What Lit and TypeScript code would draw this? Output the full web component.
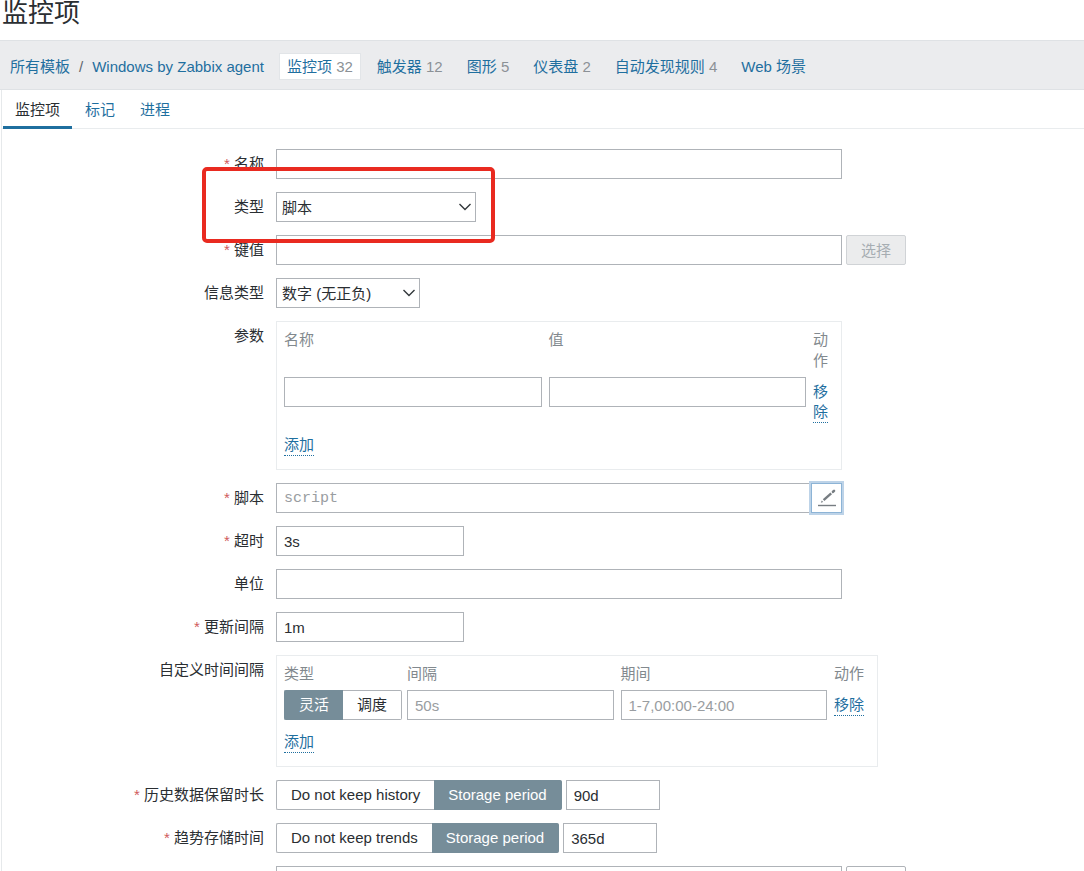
import { LitElement, html, css, nothing, type TemplateResult } from "lit";
import { customElement, state } from "lit/decorators.js";
import { classMap } from "lit/directives/class-map.js";

interface NavItem {
  text: string;
  count?: number;
  current?: boolean;
}

const NAV: NavItem[] = [
  { text: "监控项", count: 32, current: true },
  { text: "触发器", count: 12 },
  { text: "图形", count: 5 },
  { text: "仪表盘", count: 2 },
  { text: "自动发现规则", count: 4 },
  { text: "Web 场景" },
];

const TABS = ["监控项", "标记", "进程"];

@customElement("app-root")
export class AppRoot extends LitElement {
  @state() private tab = 0;

  static styles = css`
    :host {
      display: block;
      height: 100vh;
      overflow: hidden;
      background: #fff;
      color: #2a2e32;
      font: 15px/21px "Liberation Sans", Arial, "Noto Sans CJK SC", sans-serif;
    }
    * {
      box-sizing: border-box;
    }
    a {
      color: #1f6f9f;
      text-decoration: none;
    }
    input,
    select,
    button {
      font: inherit;
      color: inherit;
      margin: 0;
      border-radius: 0;
    }
    .title {
      margin: 0;
      height: 40px;
      padding-left: 2px;
      font-size: 26px;
      line-height: 26px;
      font-weight: 400;
    }
    .nav {
      display: flex;
      align-items: center;
      gap: 8px;
      height: 50px;
      padding: 2px 0 0 10px;
      background: #ebecee;
      border-top: 1px solid #dfe2e5;
      border-bottom: 1px solid #dfe2e5;
      white-space: nowrap;
    }
    .crumbs {
      display: flex;
      gap: 9px;
      margin-right: 7px;
      color: #5d666d;
    }
    .nav-item {
      padding: 2px 7px;
      border: 1px solid transparent;
    }
    .nav-item.current {
      background: #fff;
      border-color: #e2e5e8;
    }
    .count {
      color: #8b9196;
    }
    .sheet {
      margin-left: 1px;
      border-left: 1px solid #e6e9eb;
    }
    .tabs {
      display: flex;
      gap: 1px;
      height: 39px;
      padding-left: 1px;
      border-bottom: 1px solid #e9ecee;
    }
    .tab {
      height: 39px;
      padding: 2px 12px 0;
      border: 0;
      border-bottom: 3px solid transparent;
      background: none;
      color: #1f6f9f;
    }
    .tab.active {
      color: #2a2e32;
      border-bottom-color: #1f6f9f;
    }
    .form {
      display: grid;
      gap: 13px;
      padding: 20px 12px 20px 0;
    }
    .row {
      display: grid;
      grid-template-columns: 262px minmax(0, 1fr);
      column-gap: 12px;
    }
    .caption {
      padding-top: 4px;
      text-align: right;
    }
    .star {
      color: #d05a5a;
    }
    .field {
      position: relative;
      display: flex;
      align-items: flex-start;
      gap: 4px;
      min-width: 0;
    }
    .text {
      height: 30px;
      width: 100%;
      min-width: 0;
      padding: 0 7px;
      border: 1px solid #afb3b8;
      background: #fff;
      outline: 0;
    }
    .text::placeholder {
      color: #999da1;
      opacity: 1;
    }
    .wide {
      max-width: 566px;
    }
    .short {
      max-width: 188px;
    }
    .period {
      max-width: 94px;
    }
    .mono {
      font-family: "Liberation Mono", monospace;
    }
    .select {
      display: grid;
      align-items: center;
      height: 30px;
    }
    .select > * {
      grid-area: 1 / 1;
    }
    .select select {
      width: 100%;
      height: 30px;
      padding: 0 28px 0 5px;
      border: 1px solid #afb3b8;
      background: #fff;
      appearance: none;
      outline: 0;
    }
    .select svg {
      justify-self: end;
      margin-right: 4px;
      pointer-events: none;
    }
    .w-type {
      width: 200px;
    }
    .w-info {
      width: 144px;
    }
    .button {
      flex: none;
      width: 60px;
      height: 30px;
      padding: 0;
      border: 1px solid #d0d3d6;
      border-radius: 2px;
      background: #ebeced;
      color: #a6adb2;
    }
    .button.plain {
      background: #fff;
      border-color: #afb3b8;
      color: #1f6f9f;
    }
    .highlight {
      position: absolute;
      left: -74px;
      top: -25px;
      width: 293px;
      height: 76px;
      border: 4px solid #e92a20;
      border-radius: 5px;
      pointer-events: none;
      z-index: 1;
    }
    .joined {
      display: flex;
      width: 100%;
      max-width: 566px;
    }
    .joined .text {
      border-right: 0;
    }
    .edit {
      display: grid;
      place-items: center;
      flex: none;
      width: 31px;
      height: 30px;
      padding: 0;
      border: 1px solid #8db4d6;
      background: #fff;
      box-shadow: 0 0 0 2px #bdd3e8;
    }
    .panel {
      width: 100%;
      padding: 7px 6px 13px 7px;
      border: 1px solid #e9ecee;
    }
    .panel.params {
      max-width: 566px;
    }
    .panel.intervals {
      max-width: 602px;
    }
    .grid {
      width: 100%;
      border-collapse: collapse;
      table-layout: fixed;
    }
    .grid th {
      padding: 0 7px 6px 0;
      color: #82898e;
      font-weight: 400;
      text-align: left;
      vertical-align: top;
    }
    .grid td {
      padding: 0 7px 0 0;
      vertical-align: top;
    }
    .grid .last {
      padding-right: 0;
    }
    .grid td.last {
      padding-top: 5px;
    }
    .params .last {
      width: 22px;
      padding-right: 7px;
    }
    .intervals .last {
      width: 37px;
    }
    .intervals .kind {
      width: 123px;
      padding-right: 5px;
    }
    .link {
      padding: 0;
      border: 0;
      border-bottom: 1px dotted #1f6f9f;
      background: none;
      color: #1f6f9f;
      line-height: 20px;
      display: block;
      text-align: left;
    }
    .add {
      margin-top: 12px;
    }
    .segments {
      display: flex;
      flex: none;
      margin: 0;
      padding: 0;
      border: 0;
      white-space: nowrap;
    }
    .segment {
      position: relative;
      height: 30px;
      padding: 3px 14px;
      border: 1px solid #afb3b8;
      background: #fff;
    }
    .segment:first-child {
      border-right: 0;
      border-radius: 2px 0 0 2px;
    }
    .segment:last-child {
      border-left: 0;
      border-radius: 0 2px 2px 0;
    }
    .segment:has(input:checked) {
      background: #768d99;
      border-color: #768d99;
      color: #fff;
    }
    .segment input {
      position: absolute;
      inset: 0;
      opacity: 0;
    }
  `;

  private row(
    id: string,
    caption: string,
    required: boolean,
    control: TemplateResult
  ) {
    const star = required ? html`<span class="star">*</span> ` : nothing;
    return html`<div class="row">
      <label class="caption" id=${`${id}-label`} for=${id}>${star}${caption}</label>
      <div class="field">${control}</div>
    </div>`;
  }

  private select(id: string, width: string, options: string[]) {
    return html`<div class="select ${width}">
      <select id=${id}>
        ${options.map((o) => html`<option>${o}</option>`)}
      </select>
      <svg width="14" height="8" viewBox="0 0 14 8" fill="none" stroke="#33383c" stroke-width="1.4">
        <path d="M1.5 1 7 6.5 12.5 1" />
      </svg>
    </div>`;
  }

  private segments(name: string, options: string[], chosen: number) {
    return html`<fieldset class="segments" aria-labelledby=${`${name}-label`}>
      ${options.map(
        (o, i) => html`<label class="segment"
          ><input type="radio" name=${name} .checked=${i === chosen} />${o}</label
        >`
      )}
    </fieldset>`;
  }

  render() {
    return html`
      <h1 class="title">监控项</h1>
      <nav class="nav">
        <div class="crumbs">
          <a href="#">所有模板</a><span>/</span><a href="#">Windows by Zabbix agent</a>
        </div>
        ${NAV.map(
          (n) => html`<a href="#" class=${classMap({ "nav-item": true, current: !!n.current })}
            >${n.text}${n.count ? html` <span class="count">${n.count}</span>` : nothing}</a
          >`
        )}
      </nav>
      <main class="sheet">
        <div class="tabs" role="tablist">
          ${TABS.map(
            (t, i) => html`<button
              type="button"
              role="tab"
              aria-selected=${i === this.tab}
              class=${classMap({ tab: true, active: i === this.tab })}
              @click=${() => (this.tab = i)}
            >${t}</button>`
          )}
        </div>
        <form class="form">
          ${this.row("name", "名称", true, html`<input class="text wide" id="name" />`)}
          ${this.row("type", "类型", false, html`${this.select("type", "w-type", ["脚本"])}
            <div class="highlight"></div>`)}
          ${this.row("key", "键值", true, html`<input class="text wide" id="key" />
            <button type="button" class="button" disabled>选择</button>`)}
          ${this.row("info", "信息类型", false, this.select("info", "w-info", ["数字 (无正负)"]))}
          ${this.row("params", "参数", false, html`<div class="panel params" id="params">
            <table class="grid">
              <thead>
                <tr><th id="p-name">名称</th><th id="p-value">值</th><th class="last">动作</th></tr>
              </thead>
              <tbody>
                <tr>
                  <td><input class="text" aria-labelledby="p-name" /></td>
                  <td><input class="text" aria-labelledby="p-value" /></td>
                  <td class="last"><button type="button" class="link">移除</button></td>
                </tr>
              </tbody>
            </table>
            <button type="button" class="link add">添加</button>
          </div>`)}
          ${this.row("script", "脚本", true, html`<div class="joined">
            <input class="text mono" id="script" placeholder="script" />
            <button type="button" class="edit" aria-labelledby="script-label">
              <svg width="20" height="20" viewBox="0 0 20 20">
                <path d="M1 17.5h18" stroke="#777d82" stroke-width="1.4" />
                <path d="M6.6 12.2 14.2 5.4" stroke="#777d82" stroke-width="2.4" />
                <path d="M16 3.8 17 2.9" stroke="#777d82" stroke-width="2.6" stroke-linecap="round" />
                <path d="M4.8 12.6 6.2 14 3.8 14.8Z" fill="#777d82" />
              </svg>
            </button>
          </div>`)}
          ${this.row("timeout", "超时", true, html`<input class="text short" id="timeout" value="3s" />`)}
          ${this.row("units", "单位", false, html`<input class="text wide" id="units" />`)}
          ${this.row("delay", "更新间隔", true, html`<input class="text short" id="delay" value="1m" />`)}
          ${this.row("intervals", "自定义时间间隔", false, html`<div class="panel intervals" id="intervals">
            <table class="grid">
              <thead>
                <tr>
                  <th class="kind" id="kind-label">类型</th><th id="i-delay">间隔</th>
                  <th id="i-period">期间</th><th class="last">动作</th>
                </tr>
              </thead>
              <tbody>
                <tr>
                  <td class="kind">${this.segments("kind", ["灵活", "调度"], 0)}</td>
                  <td><input class="text" aria-labelledby="i-delay" placeholder="50s" /></td>
                  <td><input class="text" aria-labelledby="i-period" placeholder="1-7,00:00-24:00" /></td>
                  <td class="last"><button type="button" class="link">移除</button></td>
                </tr>
              </tbody>
            </table>
            <button type="button" class="link add">添加</button>
          </div>`)}
          ${this.row("history", "历史数据保留时长", true, html`
            ${this.segments("history", ["Do not keep history", "Storage period"], 1)}
            <input class="text period" id="history" value="90d" />`)}
          ${this.row("trends", "趋势存储时间", true, html`
            ${this.segments("trends", ["Do not keep trends", "Storage period"], 1)}
            <input class="text period" id="trends" value="365d" />`)}
          ${this.row("mapping", "值映射", false, html`<input class="text wide" id="mapping" />
            <button type="button" class="button plain">选择</button>`)}
        </form>
      </main>
    `;
  }
}
